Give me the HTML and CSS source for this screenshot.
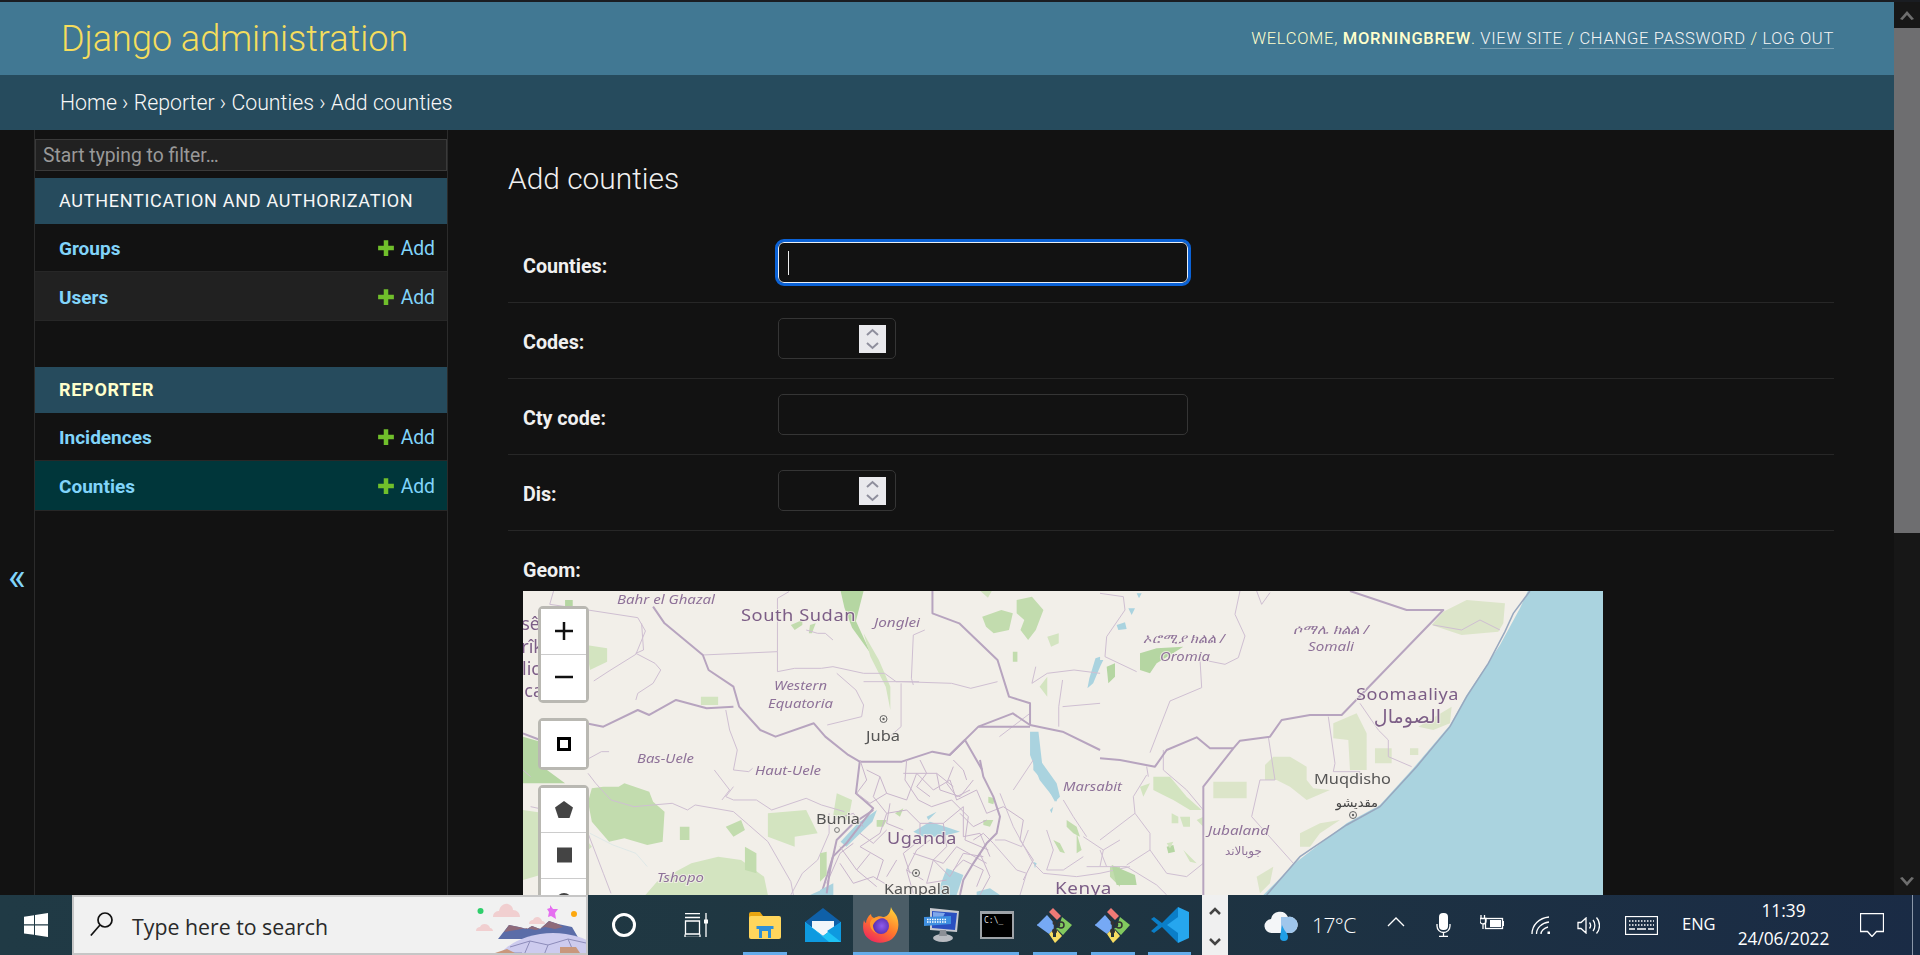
FILE: index.html
```html
<!DOCTYPE html>
<html lang="en">
<head>
<meta charset="utf-8">
<title>Add counties | Django site admin</title>
<link rel="stylesheet" href="styles.css">
</head>
<body>
<div class="screen">
  <div class="window">
    <div class="page">
      <header class="site-header">
        <a class="site-name">Django administration</a>
        <div class="user-tools">Welcome, <strong>morningbrew</strong>. <a>View site</a> / <a>Change password</a> / <a>Log out</a></div>
      </header>
      <nav class="crumbs">Home › Reporter › Counties › Add counties</nav>
      <div class="main">
        <div class="toggle">«</div>
        <aside class="sidebar">
          <input class="nav-filter" type="text" placeholder="Start typing to filter…">
          <section class="app">
            <h2 class="app-title">Authentication and Authorization</h2>
            <div class="app-row"><a class="model">Groups</a><a class="addlink"><svg class="plus" viewBox="0 0 16 16"><path d="M6 1h4v5h5v4h-5v5H6v-5H1V6h5z"/></svg>Add</a></div>
            <div class="app-row alt"><a class="model">Users</a><a class="addlink"><svg class="plus" viewBox="0 0 16 16"><path d="M6 1h4v5h5v4h-5v5H6v-5H1V6h5z"/></svg>Add</a></div>
          </section>
          <section class="app">
            <h2 class="app-title current">Reporter</h2>
            <div class="app-row"><a class="model">Incidences</a><a class="addlink"><svg class="plus" viewBox="0 0 16 16"><path d="M6 1h4v5h5v4h-5v5H6v-5H1V6h5z"/></svg>Add</a></div>
            <div class="app-row selected"><a class="model">Counties</a><a class="addlink"><svg class="plus" viewBox="0 0 16 16"><path d="M6 1h4v5h5v4h-5v5H6v-5H1V6h5z"/></svg>Add</a></div>
          </section>
        </aside>
        <main class="content">
          <h1 class="title">Add counties</h1>
          <form class="form">
            <div class="form-row"><label class="label">Counties:</label><div class="field focused"><span class="caret"></span></div></div>
            <div class="form-row"><label class="label">Codes:</label><div class="field number"><span class="spin"><svg viewBox="0 0 27 28"><path class="chev" d="M8 10l5.500-5 5.500 5M8 18l5.500 5 5.500-5"/></svg></span></div></div>
            <div class="form-row"><label class="label">Cty code:</label><div class="field"></div></div>
            <div class="form-row"><label class="label">Dis:</label><div class="field number"><span class="spin"><svg viewBox="0 0 27 28"><path class="chev" d="M8 10l5.500-5 5.500 5M8 18l5.500 5 5.500-5"/></svg></span></div></div>
            <div class="geom-row">
              <label class="label">Geom:</label>
              <div class="map">
                <svg class="map-art" viewBox="0 0 1080 400">
                  <rect class="land" width="1080" height="400"/>
                  <!-- west part, frame of crop 5 -->
                  <g transform="translate(-23,-11) scale(.3827,.3333)">
                    <path class="forest" d="M60 470l45 15 0 70 65 55H60zM170 60l20 0 0 30-20 0z"/>
                    <path class="forest-l" d="M225 195l55 10 0 40-45 25z"/>
                    <path class="forest-m" d="M240 625l30-5 40 0 15-10 65 25 10 30 30 30-5 90-40 10-60-20-40 10-45-60-10-60z"/>
                    <path class="forest-l" d="M60 690l120 20 60 90-60 60-120 40zM500 850l70-20 60 10 60 50 10 55H380l30-40zM700 700l100-10 30 70-60 10 0 30-70-30zM880 640l40 20-10 60-40-10z"/>
                    <path class="forest-m" d="M470 740l25 0 0 40-25 0zM590 740l40-20 10 30-30 20zM640 800l30 20 0 60-30-10z"/>
                    <path class="forest" d="M890 33h60l-20 90 40 100-50-80-20-60z"/>
                    <path class="forest-l" d="M950 160l40 80 30 80 0 70-12-70-40-90z"/>
                    <path class="forest-m" d="M1260 110l50-20 30 10-10 50-40 10-20-20zM1350 60l40-10 30 40-20 60-20 30-20-30 10-30-20-20zM1340 215l12 0 0 30-12 0zM760 135l30-15 0 15-20 15zM810 135l15-5-10 30-8 0z"/>
                    <path class="forest-l" d="M525 350l45 0 0 25-45 0zM1410 320l20-30 0 60zM1255 33h30l-10 20zM1430 170l30-10 0 30-20 10z"/>
                    <path class="water" d="M985 690l-12 35-68 75-15-15 45-55zM1385 455h22l12 120 36 45 0 45-45-65-25-75zM1556 235l12-5 0 30-18 50-15 15 5-30zM810 945l40-20 5 20z"/>
                    <g class="river"><path d="M235 760l60 35 60 25 30 40"/></g>
                    <g class="thin">
                      <path d="M140 33l-10 40 60 10 170 30 20 40-25 70-70 50-40 30M370 130l5 80-20 10 50 30 15 20-20 40-40 30-5 20"/>
                      <path d="M530 225l195-10 0-160 30-20M725 215l0 60 45-10 70 0 30-5 80 20 55 0 30 25 60 0M870 180l-20-20-20 0-30-10M1080 165l-5 130 5 20M1110 150l-30 15M880 280l50 50 20 45-5 35-90 25M1048 310v130l-30 30M950 305h100l130 5 50 15 70-20"/>
                      <path d="M590 390l10 60 20 60-10 60 40 5 10-10M560 570l40 60-20 30M610 620l-20 30 20 10 60 0 40 30 90-35 40 20 60 20M230 580l20 30 40 50 60 20 100-10 40 20 20-15 100 20 40 40 50 50 30 60 30 60 10 60M860 700l0 60-30 80-40 40-30 65"/>
                      <path d="M225 540l40-25 20 0M60 570l20 20M80 680l80 20 70 60 40 120 20 60M1385 400l-80 70M1470 300l-10 80 0 60M1400 260l-10 50 40-30 70-10 68 10M1470 380l98-10"/>
                    </g>
                    <g class="border">
                      <path d="M400 80l30 50 100 95 15 45 65 50 15 60 55 70 40 20 100-40 30 40 60 55 30 20-10 95 45 45-70 105-35 40-30 110"/>
                      <path d="M225 430l45 10 90-50 30 15 70-45 80 25 70-5"/>
                      <path d="M60 460l45 20M940 545l110 0 80-30 45 10 75-85 90-40 45 35 85 20 98 55"/>
                      <path d="M1130 33l0 67 70 30 100 110 30 110 55 20 0 65"/>
                      <path d="M1175 525l40-45 45 90M1250 440h135"/>
                    </g>
                  </g>
                  <!-- Uganda mesh, frame of crop 11 -->
                  <g transform="translate(297,169) scale(.3333)">
                    <path class="forest-m" d="M505 110l20 5-5 18-15-5zM490 180l30 0-10 20-20-5zM740 180l30 20 10 30-20-10-20-20zM770 220l15 50-15 10zM700 240l20 10 15 30-15-5zM870 320l30 0 0 60-30-30zM170 180l30 0-10 20-20 0zM0 280l20-5 0 70-20 20zM225 160l25-15-10 25z"/>
                    <path class="water" d="M640 0h20l50 70 10 40-15 15-30-55-35-40zM280 215l50-30 60 20 30 10-60 15-50 0zM380 325l50 20-20 60-60 0zM470 395l40-10 30 20h-70zM320 170l30-15-25 25zM0 390l40-20 0 35H0zM640 305l10 5-5 15zM690 150l10-10-5 20z"/>
                    <g class="thin dense">
                      <path d="M140 30l40 20 20 50 60 20 30-80 50 50 50-30 20 60 60-30 30 70 50-20 60 40-10 60 40 60-30 60M260 0l-5 60 40 60 40 20 60-20 50 50-10 70 70 30M180 50l-20 60 40 50-20 60-60 40 70 40-20 60M200 160l60-10 40 40 0 50-50 40 20 60M300 190l70 0 60-50 0 90 50-10 30 70M370 190l10 70-40 40 50 50 40-70 60 10M250 40l100 0 50 40M350 40l10 50 60 20 40-50M440 60l-10-30-30-30M280 280l90 30 40-50 90 50M340 300l-20 70 60-10M150 280l-40 50 60 50M60 260l50 70M480 280l30 70-30 55"/>
                      <path d="M120 0l20 60-30 40 40 30 50-30M300 0l20 40-30 40 40 30M400 20l-20 50 30 40 40-20M210 130l-10 60 50 20M420 160l40 40 40-20M330 240l-40 30-30 60 50 30M400 330l30-30 60 30-20 50M60 310l40 60 60-20 50 30M230 300l-30 50M260 330l20 70M460 240l30-20 30 30M120 220l40 30 40-40M40 180l60-20 30 40M100 250l-40 30-40 90"/>
                    </g>
                    <g class="thin">
                      <path d="M520 250l70 80 30 10-20 65M540 100l40 100 60 110 30 30 100 10 70-10 90-20M625 210l-20 50-50-20-30 0M680 210l20 60-20 60 50 0 60-40M790 230l60 40-10 50-40 0M850 270l50-30M640 0l-60 90M730 120l30 50 40 60"/>
                    </g>
                    <g class="border">
                      <path d="M480 0l10 50 30 60 20 60-10 50-30 30-40 60-30 50-10 45M20 400l10-70 20-90 50-50 60-40"/>
                    </g>
                  </g>
                  <!-- east part, frame of crop 6 -->
                  <g transform="translate(577,-11) scale(.3333)">
                    <path class="forest" d="M120 220l50-15 80-5-80 50-20 30-30-10zM35 855l70 30 5 30-60 0zM20 260l25-10 0 40-20 20zM200 800l20-5 5 20-20 5z"/>
                    <path class="forest-pale" d="M995 135l35-40 70-35 115 10-5 60-15 25-110 10zM700 430l70-30 30 60 0 110-50 0-5-90-45-5zM825 505h50v45h-50zM340 605h100v50H340zM495 555l25-25h50l50 30 0 40 20 25 50 5-70 30-50-40-40-20-35 0zM955 440l100-60-5 50-50 20zM930 505h25v20h-25zM600 760l60-30 60-10-60 40-30 40-30 0zM470 890l50-30-10 50-30 30z"/>
                    <path class="forest-l" d="M160 590l50 0 50 60 45 40-35 0-50-30-20-10-40-20zM120 620l30-10-20 40zM215 700l20 10 0 20-20 0zM240 710l30 0 0 30-20 0zM200 790l20-5-10 20zM250 810l40 40-20-5zM290 720l20-10 0 30z"/>
                    <path class="water" d="M1285 33h225v912H490l100-100 150-115 100-55 100-110 110-130 50-90 100-150 60-110 50-110 50-70z"/>
                    <path class="water" d="M85 85l20 0-10 20zM50 135l25-8 5 20-25 3zM0 240l10 0-10 20zM110 40l15 0-8 15z"/>
                    <g class="thin">
                      <path d="M420 33l-15 70 30 65-20 65-40 20-75-15 5 85-95 40-60 155M470 33l15 40 25-35M0 40l70 10 5 40-55 80-5 60 95 45M100 650l40-65M100 650l5 50-105 80M105 700l45 60 0 50-70 45M150 810l50 70 60 10 50-40M0 860l80 0 90 55 30 30M0 810l20 50M140 560l5 30M190 510l0 60 70 60 50 60"/>
                      <path d="M1000 135l85 15 55-30 60 30M685 410l20 140-5 25h80l-10 40M480 600h45l-20-130M480 600l-25 110 125 140M780 370l55 80 30 30v50l70 30"/>
                    </g>
                    <path class="coast" d="M1290 33l-50 67-25 55-50 95-65 100-50 90-100 120-110 120-100 55-140 95-100 115"/>
                    <g class="border">
                      <path d="M750 33l170 57h110L725 405h-95l-85 15-35 50-90 12-20 23-90 115v325"/>
                      <path d="M400 505h-70l-40-33-90 38-35 50-105-20-60-5"/>
                    </g>
                  </g>
                  <!-- labels -->
                  <g class="place">
                    <text x="17" y="39">sê</text><text x="20" y="62">rîk</text><text x="17" y="84">lic</text><text x="20" y="106">ica</text>
                  </g>
                  <text class="region" x="94" y="13" textLength="98" lengthAdjust="spacingAndGlyphs">Bahr el Ghazal</text>
                  <text class="country" x="218" y="30" textLength="115" lengthAdjust="spacingAndGlyphs">South Sudan</text>
                  <text class="region" x="351" y="36" textLength="46" lengthAdjust="spacingAndGlyphs">Jonglei</text>
                  <text class="region" x="251" y="99" textLength="53" lengthAdjust="spacingAndGlyphs">Western</text>
                  <text class="region" x="245" y="117" textLength="65" lengthAdjust="spacingAndGlyphs">Equatoria</text>
                  <text class="city" x="343" y="150" textLength="34" lengthAdjust="spacingAndGlyphs">Juba</text>
                  <text class="region" x="114" y="172" textLength="57" lengthAdjust="spacingAndGlyphs">Bas-Uele</text>
                  <text class="region" x="232" y="184" textLength="66" lengthAdjust="spacingAndGlyphs">Haut-Uele</text>
                  <text class="city" x="293" y="233" textLength="44" lengthAdjust="spacingAndGlyphs">Bunia</text>
                  <text class="country" x="364" y="253" textLength="70" lengthAdjust="spacingAndGlyphs">Uganda</text>
                  <text class="city" x="361" y="303" textLength="66" lengthAdjust="spacingAndGlyphs">Kampala</text>
                  <text class="region" x="134" y="291" textLength="47" lengthAdjust="spacingAndGlyphs">Tshopo</text>
                  <text class="region" x="540" y="200" textLength="59" lengthAdjust="spacingAndGlyphs">Marsabit</text>
                  <text class="country" x="532" y="303" textLength="57" lengthAdjust="spacingAndGlyphs">Kenya</text>
                  <text class="region" x="620" y="52" textLength="82" lengthAdjust="spacingAndGlyphs">ኦሮሚያ ክልል /</text>
                  <text class="region" x="637" y="70" textLength="50" lengthAdjust="spacingAndGlyphs">Oromia</text>
                  <text class="region" x="770" y="43" textLength="76" lengthAdjust="spacingAndGlyphs">ሶማሌ ክልል /</text>
                  <text class="region" x="785" y="60" textLength="46" lengthAdjust="spacingAndGlyphs">Somali</text>
                  <text class="country" x="833" y="109" textLength="103" lengthAdjust="spacingAndGlyphs">Soomaaliya</text>
                  <text class="country arabic" x="918" y="132" text-anchor="end">الصومال</text>
                  <text class="city" x="791" y="193" textLength="77" lengthAdjust="spacingAndGlyphs">Muqdisho</text>
                  <text class="city arabic-s" x="855" y="216" text-anchor="end">مقديشو</text>
                  <text class="region" x="685" y="244" textLength="61" lengthAdjust="spacingAndGlyphs">Jubaland</text>
                  <text class="region arabic-r" x="739" y="264" text-anchor="end">جوبالاند</text>
                  <g class="dot"><circle cx="360.500" cy="128" r="3.500"/><circle cx="393" cy="282" r="3.500"/><circle cx="830" cy="224" r="3.500"/></g>
                  <g class="dot-c"><circle cx="360.500" cy="128" r="1.200"/><circle cx="393" cy="282" r="1.200"/><circle cx="830" cy="224" r="1.200"/></g>
                  <circle class="dot-o" cx="314" cy="239" r="2.400"/>
                </svg>
                <div class="map-controls">
                  <div class="ctl-group">
                    <button class="ctl" type="button"><svg viewBox="0 0 18 18"><path class="ctl-line" d="M0 9h18M9 0v18"/></svg></button>
                    <button class="ctl" type="button"><svg viewBox="0 0 18 18"><path class="ctl-line" d="M0 9h18"/></svg></button>
                  </div>
                  <div class="ctl-group">
                    <button class="ctl" type="button"><svg viewBox="0 0 18 18"><rect class="ctl-box" x="3.500" y="3.500" width="11" height="11"/></svg></button>
                  </div>
                  <div class="ctl-group">
                    <button class="ctl" type="button"><svg viewBox="0 0 18 18"><path class="ctl-solid" d="M9 0l9 6.500-3.500 10.500h-11L0 6.500z"/></svg></button>
                    <button class="ctl" type="button"><svg viewBox="0 0 18 18"><rect class="ctl-solid" x="2" y="1.500" width="15" height="15"/></svg></button>
                    <button class="ctl" type="button"><svg viewBox="0 0 18 18"><circle class="ctl-solid" cx="9" cy="9" r="8"/></svg></button>
                  </div>
                </div>
              </div>
            </div>
          </form>
        </main>
      </div>
    </div>
    <div class="scrollbar">
      <div class="sb-btn"><svg viewBox="0 0 26 26"><path class="sb-arrow" d="M6 17l7-8 7 8-2.500 1-4.500-5-4.500 5z"/></svg></div>
      <div class="sb-thumb"></div>
      <div class="sb-track"></div>
      <div class="sb-btn"><svg viewBox="0 0 26 26"><path class="sb-arrow" d="M6 9l7 8 7-8-2.500-1-4.500 5-4.500-5z"/></svg></div>
    </div>
  </div>
  <footer class="taskbar">
    <div class="start"><svg class="i24" viewBox="0 0 24 24"><path class="white" d="M0 3.700L10 2.200V11.300H0zM11 2L24 0V11.300H11zM0 12.500H10V21.800L0 20.400zM11 12.500H24V24L11 22z"/></svg></div>
    <div class="search">
      <svg class="i24 search-i" viewBox="0 0 24 24"><circle class="s-dark" cx="15" cy="8" r="7"/><path class="s-dark" d="M10 13L.8 23.500"/></svg>
      <span class="search-text">Type here to search</span>
      <svg class="search-art" viewBox="0 0 111 56">
        <circle cx="5.500" cy="14" r="3" fill="#2fce6b"/>
        <path fill="#f1cfd0" d="M18 20c0-5 4-6 6-6 1-5 5-8 9-7 3 1 5 3 5 6 4 0 7 3 7 7zM54 27c0-3 2-4 4-4 1-3 5-4 7-2 1 1 2 2 2 3 2 0 3 1 3 3zM1 34c0-3 2-4 4-4 1-3 5-4 8-2 1 1 2 2 2 3 2 0 3 2 3 3z"/>
        <path fill="#e56ef0" d="M75 8l3 4 5 0-3 4 1 6-5-3-3 1 1-5-2-3 3-1z"/>
        <circle cx="99" cy="17" r="3" fill="#fca80f"/>
        <path fill="#5b6da8" d="M23 42l11-14 10 2 8 2 5-3 8 3 9-8 9 3 14 3 7 12z"/>
        <path fill="#8e6a7a" d="M34 28l10 2 8 2 5-3 8 3 9-8 9 3 5 3-8 2-10-2-9 3-10-2-10 2-12 2z"/>
        <ellipse cx="78" cy="86" rx="66" ry="50" fill="#cdcbee"/>
        <path fill="none" stroke="#8d8cba" stroke-width="1" d="M35 50l20-6 18 4 20-6 18 4M55 44l-6 14M73 48l-4 10M93 42l6 14M25 56l22 0"/>
        <path fill="#c9977c" d="M20 56l12-4 8 4zM85 50l16 0 4 6-20 0z"/>
      </svg>
    </div>
    <div class="cortana"><span class="ring"></span></div>
    <div class="taskview"><svg class="i24" viewBox="0 0 24 24"><path class="s-white" d="M1 .500H16M1 4.500H16M1.500 8H15.500V21H1.500zM1 24.500H16M1 21.500V24.500M16 21.500V24.500M22 0V24"/><rect class="white" x="20" y="6.500" width="4" height="4"/></svg></div>
    <div class="apps">
      <div class="app-btn open explorer">
        <svg class="icon-32" viewBox="0 0 32 28"><path fill="#e8a510" d="M0 3a2 2 0 0 1 2-2h9l3 4h16v6H0z"/><rect y="5" width="32" height="23" rx="2" fill="#ffd65c"/><path fill="#2e8fd6" d="M10 27v-9H7.500v-3h17v3H22v9h-3v-7h-6v7z"/></svg>
      </div>
      <div class="app-btn mail">
        <svg class="icon-36" viewBox="0 0 36 34"><path fill="#0f60a8" d="M18 0l18 14v20H0V14z"/><path fill="#f1f6fa" d="M7 13h22v7l-11 8-11-8z"/><path fill="#1ec3f5" d="M0 14l18 14 18-14v20H0z"/><path fill="#0e9ae0" d="M0 14l24 20H0zM36 34L22 23l14-9z"/></svg>
      </div>
      <div class="app-btn open active firefox">
        <svg class="icon-36" viewBox="0 0 36 36">
          <defs>
            <linearGradient id="ffa" x1=".8" y1="0" x2=".2" y2="1"><stop offset="0" stop-color="#ffd23a"/><stop offset=".5" stop-color="#ff7a2b"/><stop offset="1" stop-color="#f0235f"/></linearGradient>
            <radialGradient id="ffb" cx=".55" cy=".5" r=".55"><stop offset="0" stop-color="#8f5cec"/><stop offset="1" stop-color="#5a2fb0"/></radialGradient>
          </defs>
          <path fill="url(#ffa)" d="M28 0c1 4 4 5 6 10 3 8 1 17-5 22-7 5-17 5-23 0C0 28-1 20 1 13c.5 2 1.500 3 2 3 0-3 2-7 5-9 0 2 1 3 3 4 4-2 6-2 9-1 3 0 7-2 8-10z"/>
          <circle cx="18" cy="19" r="8" fill="url(#ffb)"/>
          <path fill="#ff9a2e" d="M9 12c4-2 8-2 11-1-4 0-8 3-10 7-.5 4 2 8 6 9-5-1-9-5-9-10 0-2 1-4 2-5z"/>
        </svg>
      </div>
      <div class="app-btn open pc">
        <svg class="icon-36" viewBox="0 0 36 34">
          <path fill="#c7c9cf" d="M6 0l29 3-2 21-27-2z"/><path fill="#2a4fc0" d="M8 3l25 2-2 17-23-2z"/><path fill="#7ea7ea" d="M9 4l12 1-3 6-9 1z"/>
          <ellipse cx="19" cy="30" rx="10" ry="4" fill="#b9bcc2"/><path fill="#8c9097" d="M16 22h6l1 6h-8z"/>
          <path fill="#3e8fe0" d="M0 9l27-1v8l-27 2z"/>
          <path fill="none" stroke="#fff" stroke-width="1.500" stroke-dasharray="1.500 1" d="M3 11.500h20M3 14h20"/>
        </svg>
      </div>
      <div class="app-btn open cmd">
        <div class="cmd-win"><span class="cmd-body">C:\_</span></div>
      </div>
      <div class="app-btn open git">
        <svg class="icon-36" viewBox="0 0 36 36"><use href="#gitmark"/></svg>
      </div>
      <div class="app-btn open git">
        <svg class="icon-36" viewBox="0 0 36 36">
          <g id="gitmark">
            <path fill="#f07a76" d="M12 5l4-4 8 8-4 4z"/>
            <path fill="#76a9f5" d="M10 8l7 8v6l-5 5L1 19a1 1 0 0 1 0-2z"/>
            <path fill="#82c95f" d="M25 10l10 8-9 10-7-7c3 0 5-2 4-5z"/>
            <path fill="#f7dd62" d="M12 27l4-4v7h3v-8l6 7-7 7z"/>
            <circle cx="17.500" cy="24" r="2.500" fill="#333"/><circle cx="17.500" cy="16" r="2" fill="#333"/><circle cx="24" cy="18" r="3" fill="none" stroke="#333" stroke-width="1.500"/>
            <path fill="none" stroke="#333" stroke-width="1.500" d="M17.500 16v13M13 8l5 9"/>
          </g>
        </svg>
      </div>
      <div class="app-btn open vscode">
        <svg class="icon-38" viewBox="0 0 38 36"><path fill="#0a7ec8" d="M27 0L11 16 3 10 0 12l7 6-7 6 3 2 8-6 16 16z"/><path fill="#26a6ee" d="M27 0l11 5v26l-11 5zM27 10L16 18l11 8z"/></svg>
      </div>
    </div>
    <div class="overflow-btn"><svg viewBox="0 0 26 60"><path class="ov-chev" d="M8 19l5-5 5 5M8 44l5 5 5-5"/></svg></div>
    <div class="tray">
      <svg class="weather" viewBox="0 0 34 32"><path fill="#f4f6f8" d="M8 24a7 7 0 0 1-1-14A9 9 0 0 1 24 8a8 8 0 0 1 3 16z"/><path fill="#9fc6ec" d="M17 8h7a8 8 0 0 1 3 16H17z"/><path fill="#1f9fe6" d="M18 16c2 6 6 8 6 12a4 4 0 0 1-8 0z"/></svg>
      <span class="temp">17°C</span>
      <svg class="t-chev" viewBox="0 0 18 10"><path class="s-white" d="M1 9l8-8 8 8"/></svg>
      <svg class="t-mic" viewBox="0 0 15 24"><rect class="white" x="3" y="0" width="9" height="17" rx="4"/><path class="s-white" d="M1 11v2a6.500 6.500 0 0 0 13 0v-2M7.500 20v3M3 23.500h9"/></svg>
      <svg class="t-power" viewBox="0 0 24 15"><rect class="s-white" x="5.500" y="3.500" width="17" height="10"/><rect class="white" x="10" y="5" width="11" height="7"/><rect class="white" x="23" y="6" width="1" height="5"/><path class="s-white" d="M1 0v3M4.500 0v3M0 3.500h6v2.500a3 3 0 0 1-6 0zM3 9v5"/></svg>
      <svg class="t-wifi" viewBox="0 0 20 18"><path class="s-white" d="M1 18C1 9 8 2 18 1M5.500 18c0-6 5-11 12.500-12M10 18c0-3 3-6 7-7"/><rect class="white" x="16.500" y="15.500" width="2.500" height="2.500"/></svg>
      <svg class="t-vol" viewBox="0 0 23 17"><path class="s-white" d="M1 5.500h3L9 1v15l-5-4.500H1zM12.500 5.500c1.500 2 1.500 4 0 6M16 3c2.500 3 2.500 8 0 11M19.500 .500c4 4.500 4 11.500 0 16"/></svg>
      <svg class="t-kbd" viewBox="0 0 33 19"><rect class="s-white" x=".5" y=".5" width="32" height="18"/><path class="s-white dots" d="M4 5h25M4 9h25"/><path class="s-white" d="M4 13h6M12 13h9M23 13h6"/></svg>
      <span class="lang">ENG</span>
      <div class="clock"><span>11:39</span><span>24/06/2022</span></div>
      <svg class="t-note" viewBox="0 0 24 24"><path class="s-white" d="M.5 .5h23v18h-7l-4.500 5-4.500-5h-7z"/></svg>
      <span class="show-desktop"></span>
    </div>
  </footer>
</div>
</body>
</html>
```

FILE: styles.css
```css
* { box-sizing: border-box; }
html, body { margin: 0; padding: 0; height: 100%; overflow: hidden; }
body { background: #121212; font-family: Roboto, "Liberation Sans", sans-serif; color: #f5f5f5; }
svg { display: block; }

.screen { display: flex; flex-direction: column; height: 955px; width: 1920px; }
.window { flex: 1; min-height: 0; display: flex; border-top: 2px solid #1a1d22; }
.page { flex: 1; min-width: 0; display: flex; flex-direction: column; overflow: hidden; }

.site-header { flex: none; height: 73px; background: #417893; display: flex; align-items: center; justify-content: space-between; padding: 0 60px 0 61px; }
.site-name { font-size: 36px; font-weight: 300; color: #f5dd5d; }
.user-tools { font-size: 16.550px; font-weight: 300; letter-spacing: .7px; text-transform: uppercase; color: #ffc; margin-top: -1px; }
.user-tools strong { font-weight: 500; }
.user-tools a { color: #f5f5f5; border-bottom: 1px solid rgba(255,255,255,.3); }

.crumbs { flex: none; height: 55px; background: #264b5d; padding: 0 60px; display: flex; align-items: center; font-size: 21.300px; font-weight: 300; color: #f8f8f8; }

.main { flex: 1; min-height: 0; display: flex; overflow: hidden; }
.toggle { flex: none; width: 34px; padding-top: 128px; display: flex; align-items: center; justify-content: center; color: #81d4fa; font-size: 38px; line-height: 38px; }

.sidebar { flex: none; width: 414px; border-left: 1px solid #2b2b2b; border-right: 1px solid #2b2b2b; padding-top: 9px; display: flex; flex-direction: column; }
.nav-filter { display: block; width: 100%; height: 32px; background: #212121; border: 1px solid #3a3a3a; color: #eee; padding: 0 7px; font: 400 19.300px Roboto, sans-serif; outline: 0; }
.nav-filter::placeholder { color: #999; opacity: 1; }
.app { margin-top: 7px; margin-bottom: 39px; }
.app-title { margin: 0; height: 46px; background: #264b5d; padding: 0 24px 2px; display: flex; align-items: center; font-size: 18px; font-weight: 400; letter-spacing: .72px; text-transform: uppercase; color: #f7f7f7; }
.app-title.current { font-weight: 700; color: #ffc; }
.app-row { height: 48px; padding: 1px 12px 0 24px; display: flex; align-items: center; justify-content: space-between; border-bottom: 1px solid #272727; font-size: 19.300px; color: #81d4fa; }
.app-row.alt { height: 49px; padding-top: 2px; background: #212121; }
.app-row.selected { height: 50px; background: #00363a; }
.model { font-weight: 700; font-size: 19px; }
.addlink { display: flex; align-items: center; gap: 6px; font-weight: 400; }
.plus { width: 18px; height: 18px; fill: #70bf2b; }

.content { flex: 1; min-width: 0; padding: 0 60px; overflow: hidden; }
.title { margin: 0; height: 97px; padding-top: 29px; font-size: 29.900px; line-height: 40px; font-weight: 300; color: #f0f0f0; }
.form-row { height: 76px; padding: 15px 0 0 15px; border-bottom: 1px solid #272727; display: flex; align-items: flex-start; }
.label { display: block; width: 255px; flex: none; padding-top: 12px; font-size: 19.700px; line-height: 26px; font-weight: 700; color: #f0f0f0; }
.field { position: relative; width: 410px; height: 41px; border: 1px solid #353535; border-radius: 5px; background: #121212; }
.field.number { width: 118px; }
.field.focused { border: 1px solid #e8eef5; outline: 3px solid #0b62d6; outline-offset: 0; border-radius: 6px; }
.caret { position: absolute; left: 9px; top: 8px; width: 1px; height: 24px; background: #eee; }
.spin { position: absolute; right: 9px; top: 6px; width: 27px; height: 28px; background: #e9e9ed; }
.chev { fill: none; stroke: #8f8f9d; stroke-width: 2; }

.geom-row { padding: 15px 0 0 15px; }
.map { position: relative; margin-top: 7px; width: 1080px; height: 400px; overflow: hidden; background: #f2efe9; }
.map-art { width: 1080px; height: 400px; filter: blur(.45px); }
.land { fill: #f2efe9; }
.forest { fill: #b5d6a2; }
.forest-m { fill: #c2dcae; }
.forest-l { fill: #d3e4c0; }
.forest-pale { fill: #dce5c9; }
.water { fill: #aad3df; }
.river path { fill: none; stroke: #bcd9e4; stroke-width: 1; }
.thin path { fill: none; stroke: #cfbfd2; stroke-width: 1; vector-effect: non-scaling-stroke; }
.dense path { stroke: #c9b6cc; }
.border path { fill: none; stroke: #b7a4bf; stroke-width: 2; vector-effect: non-scaling-stroke; stroke-linejoin: round; }
.coast { fill: none; stroke: #98a8bf; stroke-width: 1.500; vector-effect: non-scaling-stroke; }
.map text { font-family: "Noto Sans", "DejaVu Sans", sans-serif; paint-order: stroke; stroke: rgba(242,239,233,.8); stroke-width: 2px; }
.region { font-size: 13px; font-style: italic; fill: #8e7299; }
.country { font-size: 17px; fill: #7c5e87; letter-spacing: .5px; }
.arabic { font-family: "DejaVu Sans", sans-serif; font-size: 19px; letter-spacing: 0; }
.city { font-size: 15px; fill: #555; }
.arabic-s { font-size: 13px; fill: #444; }
.arabic-r { font-style: normal; font-size: 12px; }
.place text { font-size: 18px; fill: #7c5e87; text-anchor: end; }
.dot circle { fill: #f2efe9; stroke: #666; stroke-width: 1; }
.dot-c circle { fill: #666; }
.dot-o { fill: #f2efe9; stroke: #777; stroke-width: 1; }

.map-controls { position: absolute; left: 15px; top: 15px; display: flex; flex-direction: column; gap: 15px; }
.ctl-group { width: 51px; border: 3px solid #b9b8b2; border-radius: 5px; background: #fff; display: flex; flex-direction: column; }
.ctl { width: 45px; height: 45.500px; padding: 0; border: 0; background: #fff; display: flex; align-items: center; justify-content: center; border-bottom: 1px solid #ccc; }
.ctl:last-child { border-bottom: 0; }
.ctl svg { width: 18px; height: 18px; }
.ctl-line { fill: none; stroke: #111; stroke-width: 2.500; }
.ctl-box { fill: none; stroke: #000; stroke-width: 3; }
.ctl-solid { fill: #444; }

.scrollbar { flex: none; width: 26px; display: flex; flex-direction: column; background: #171717; }
.sb-btn { flex: none; height: 26px; }
.sb-btn svg { width: 26px; height: 26px; }
.sb-arrow { fill: #6e6e6e; }
.sb-thumb { flex: none; height: 505px; background: #6e6e70; }
.sb-track { flex: 1; }

.taskbar { flex: none; height: 60px; display: flex; align-items: center; background: linear-gradient(90deg, #203a45 0%, #1f3641 50%, #1a2b45 100%); color: #fff; }
.white { fill: #fff; }
.s-white { fill: none; stroke: #fff; stroke-width: 1.300; }
.dots { stroke-dasharray: 1.500 1.500; }
.s-dark { fill: none; stroke: #111; stroke-width: 1.700; }
.i24 { width: 24px; height: 24px; }
.start { width: 72px; height: 60px; display: flex; align-items: center; justify-content: center; }
.search { width: 516px; height: 60px; background: #f1f1f1; border: 2px solid #c6c6c6; display: flex; align-items: center; padding-left: 16px; }
.search-i { margin-top: -2px; }
.search-text { margin-left: 18px; margin-top: 2px; font-family: "Open Sans", sans-serif; font-size: 21.300px; color: #2a2a2a; }
.search-art { margin-left: auto; width: 111px; height: 56px; flex: none; }
.cortana { width: 72px; height: 60px; display: flex; align-items: center; justify-content: center; }
.ring { width: 24px; height: 24px; border: 3px solid #fff; border-radius: 50%; }
.taskview { width: 71px; display: flex; justify-content: center; }
.apps { display: flex; height: 60px; margin-left: 12px; }
.app-btn { position: relative; height: 60px; display: flex; align-items: center; justify-content: center; }
.app-btn.open::after { content: ""; position: absolute; left: 0; right: 0; bottom: 0; height: 3px; background: #64acea; }
.app-btn.active { background: #4b5d67; }
.explorer { width: 44px; }
.mail { width: 66px; padding-left: 6px; }
.firefox { width: 56px; }
.pc { width: 66px; }
.cmd { width: 44px; }
.git { width: 44px; margin-left: 14px; }
.vscode { width: 43px; margin-left: 13px; }
.icon-32 { width: 32px; height: 28px; }
.icon-36 { width: 36px; height: 36px; }
.icon-38 { width: 38px; height: 36px; }
.cmd-win { width: 34px; height: 28px; border: 2px solid #9ea3a8; border-top-width: 3px; background: #000; display: flex; flex-direction: column; }
.cmd-body { font: 8px/10px "DejaVu Sans Mono", monospace; color: #ddd; padding: 2px 0 0 2px; }
.overflow-btn { width: 26px; height: 60px; margin-left: 11px; background: #f0f0f0; flex: none; }
.overflow-btn svg { width: 26px; height: 60px; }
.ov-chev { fill: none; stroke: #444; stroke-width: 2.500; }
.tray { flex: 1; height: 60px; position: relative; display: flex; align-items: center; padding-left: 36px; }
.weather { width: 34px; height: 32px; flex: none; }
.temp { margin-left: 14px; width: 43px; font-family: "Open Sans", sans-serif; font-size: 21px; letter-spacing: -.6px; font-weight: 300; white-space: nowrap; }
.t-chev { width: 18px; height: 10px; margin-left: 32px; margin-top: -6px; }
.t-mic { width: 15px; height: 24px; margin-left: 31px; }
.t-power { width: 24px; height: 15px; margin-left: 29px; margin-top: -6px; }
.t-wifi { width: 20px; height: 18px; margin-left: 27px; }
.t-vol { width: 23px; height: 17px; margin-left: 26px; }
.t-kbd { width: 33px; height: 19px; margin-left: 25px; }
.lang { margin-left: 24px; width: 36px; font-family: "Open Sans", sans-serif; font-size: 16.500px; margin-top: -3px; }
.clock { margin-left: 18px; width: 95px; display: flex; flex-direction: column; align-items: center; gap: 8px; font-family: "Open Sans", sans-serif; font-size: 17.300px; line-height: 20px; }
.t-note { width: 24px; height: 24px; margin-left: 29px; }
.show-desktop { position: absolute; right: 7px; top: 0; bottom: 0; width: 1px; background: #8b97a8; }
```
